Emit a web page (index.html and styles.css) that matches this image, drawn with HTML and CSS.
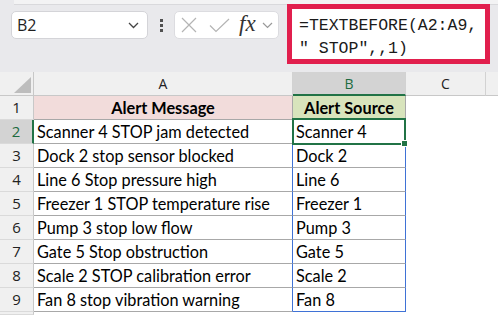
FILE: index.html
```html
<!DOCTYPE html>
<html>
<head>
<meta charset="utf-8">
<link rel="stylesheet" href="styles.css">
</head>
<body>
<div class="app">
  <div class="toolbar">
    <div class="namebox">
      <span class="nb-text">B2</span>
      <svg class="chev" width="11" height="7" viewBox="0 0 11 7"><path d="M1 1 L5.5 5.5 L10 1" fill="none" stroke="#444" stroke-width="1.3"/></svg>
    </div>
    <div class="dots"><i></i><i></i><i></i></div>
    <div class="fxbox">
      <svg class="ico-x" width="16" height="16" viewBox="0 0 16 16"><path d="M1 1 L15 15 M15 1 L1 15" stroke="#b4b4b4" stroke-width="1.2" fill="none"/></svg>
      <svg class="ico-check" width="21" height="15" viewBox="0 0 21 15"><path d="M1 7.5 L7 13.5 L20 1" stroke="#b4b4b4" stroke-width="1.2" fill="none"/></svg>
      <span class="fx">fx</span>
      <svg class="chev2" width="11" height="7" viewBox="0 0 11 7"><path d="M1 1 L5.5 5.5 L10 1" fill="none" stroke="#999" stroke-width="1.2"/></svg>
    </div>
    <div class="formula">=TEXTBEFORE(A2:A9,<br>" STOP",,1)</div>
  </div>
  <div class="sheet">
    <div class="ch corner"><span class="tri"></span></div>
    <div class="ch">A</div>
    <div class="ch sel">B</div>
    <div class="ch">C</div>
    <div class="ch last"></div>

    <div class="rh">1</div>
    <div class="c hd pink">Alert Message</div>
    <div class="c hd green">Alert Source</div>
    <div class="e"></div><div class="e"></div>

    <div class="rh sel">2</div>
    <div class="c sp">Scanner 4 STOP jam detected</div>
    <div class="c sp active">Scanner 4</div>
    <div class="e"></div><div class="e"></div>

    <div class="rh">3</div>
    <div class="c sp">Dock 2 stop sensor blocked</div>
    <div class="c sp">Dock 2</div>
    <div class="e"></div><div class="e"></div>

    <div class="rh">4</div>
    <div class="c sp">Line 6 Stop pressure high</div>
    <div class="c sp">Line 6</div>
    <div class="e"></div><div class="e"></div>

    <div class="rh">5</div>
    <div class="c sp">Freezer 1 STOP temperature rise</div>
    <div class="c sp">Freezer 1</div>
    <div class="e"></div><div class="e"></div>

    <div class="rh">6</div>
    <div class="c sp">Pump 3 stop low flow</div>
    <div class="c sp">Pump 3</div>
    <div class="e"></div><div class="e"></div>

    <div class="rh">7</div>
    <div class="c sp">Gate 5 Stop obstruction</div>
    <div class="c sp">Gate 5</div>
    <div class="e"></div><div class="e"></div>

    <div class="rh">8</div>
    <div class="c sp">Scale 2 STOP calibration error</div>
    <div class="c sp">Scale 2</div>
    <div class="e"></div><div class="e"></div>

    <div class="rh">9</div>
    <div class="c sp">Fan 8 stop vibration warning</div>
    <div class="c sp endb">Fan 8</div>
    <div class="e"></div><div class="e"></div>

    <div class="rh"></div>
    <div class="e"></div><div class="e"></div><div class="e"></div><div class="e"></div>
  </div>
</div>
</body>
</html>
```

FILE: styles.css
```css
* { box-sizing: border-box; }
html, body { margin: 0; padding: 0; background: #fff; }
body { width: 498px; height: 315px; overflow: hidden; }

.app { width: 498px; }

.toolbar {
  height: 72px;
  display: flex;
  align-items: flex-start;
  padding-left: 11px;
  background-color: #e9e9ec;
  background-image: linear-gradient(#f3f3f4 0 4px, #d9d9dc 4px 5px, transparent 5px);
  background-repeat: no-repeat;
  background-position: 14px 0;
  background-size: 100% 5px;
}

.namebox {
  margin-top: 11px;
  width: 137px;
  height: 28px;
  background: #fff;
  border: 1px solid #d4d4d8;
  border-radius: 5px;
  display: flex;
  align-items: center;
  justify-content: space-between;
  padding: 0 8px 0 5px;
}
.nb-text {
  font-family: "Open Sans", sans-serif;
  font-size: 16px;
  color: #1f1f1f;
}

.dots {
  margin-left: 12px;
  margin-top: 19px;
  width: 3px;
  display: flex;
  flex-direction: column;
  gap: 2px;
}
.dots i { display: block; width: 3px; height: 3px; background: #505050; }

.fxbox {
  margin-left: 11px;
  margin-top: 11px;
  width: 105px;
  height: 28px;
  background: #fff;
  border: 1px solid #dcdce0;
  border-radius: 5px;
  display: flex;
  align-items: center;
  padding-left: 6px;
}
.ico-x { margin-right: 12px; }
.ico-check { margin-right: 9px; }
.fx {
  font-family: "Liberation Serif", serif;
  font-style: italic;
  font-size: 23px;
  color: #333;
  margin-top: -3px;
  margin-right: 6px;
}

.formula {
  margin-left: 8px;
  margin-top: 4px;
  width: 203px;
  height: 60px;
  background: #fff;
  border: 5px solid #e11f4d;
  padding: 5px 0 0 7px;
  font-family: "Liberation Mono", monospace;
  font-size: 16.5px;
  line-height: 23px;
  color: #1a1a1a;
  white-space: nowrap;
}

.sheet {
  display: grid;
  grid-template-columns: 34px 259px 113px 80px 1fr;
  grid-template-rows: repeat(10, 24px) 3px;
  overflow: hidden;
}

.ch {
  background: #f0f0f0;
  border-right: 1px solid #d2d2d2;
  border-bottom: 1px solid #c8c8c8;
  font-family: "Open Sans", sans-serif;
  font-size: 14px;
  color: #222;
  text-align: center;
  line-height: 23px;
}
.ch.sel {
  background: #d3d3d3;
  color: #1d6b3f;
  border-bottom: 2px solid #217346;
}
.ch.last { border-right: none; }
.corner { position: relative; border-right-color: #c8c8c8; }
.tri {
  position: absolute;
  left: 14px;
  top: 5px;
  width: 17px;
  height: 16px;
  background: #bdbdbd;
  clip-path: polygon(100% 0, 100% 100%, 0 100%);
}

.rh {
  background: #f0f0f0;
  border-right: 1px solid #c8c8c8;
  border-bottom: 1px solid #dadada;
  font-family: "Open Sans", sans-serif;
  font-size: 15px;
  color: #222;
  text-align: center;
  line-height: 23px;
  overflow: hidden;
}
.rh.sel {
  background: #d3d3d3;
  color: #1d6b3f;
  border-right: 2px solid #217346;
}

.c {
  border-right: 1px solid #a8a8a8;
  border-bottom: 1px solid #a8a8a8;
  padding-left: 3px;
  font-family: "Lato", sans-serif;
  font-size: 16.3px;
  line-height: 24px;
  color: #000;
  white-space: nowrap;
  overflow: hidden;
}
.c.hd { font-weight: bold; text-align: center; padding-left: 0; }
.c.pink { background: #f2dcdb; }
.c.green { background: #d8e4bc; }
.c.sp { border-right-color: #3f72d6; }
.c.endb { border-bottom-color: #3f72d6; }

.c.active { position: relative; overflow: visible; }
.c.active::after {
  content: "";
  position: absolute;
  left: -1px; right: -1px; top: -2px; bottom: -2px;
  border: 2px solid #217346;
  z-index: 2;
}
.c.active::before {
  content: "";
  position: absolute;
  right: -2px; bottom: -3px;
  width: 5px; height: 5px;
  background: #217346;
  box-shadow: 0 0 0 1px #fff;
  z-index: 3;
}

.e { background: #fff; }
```
